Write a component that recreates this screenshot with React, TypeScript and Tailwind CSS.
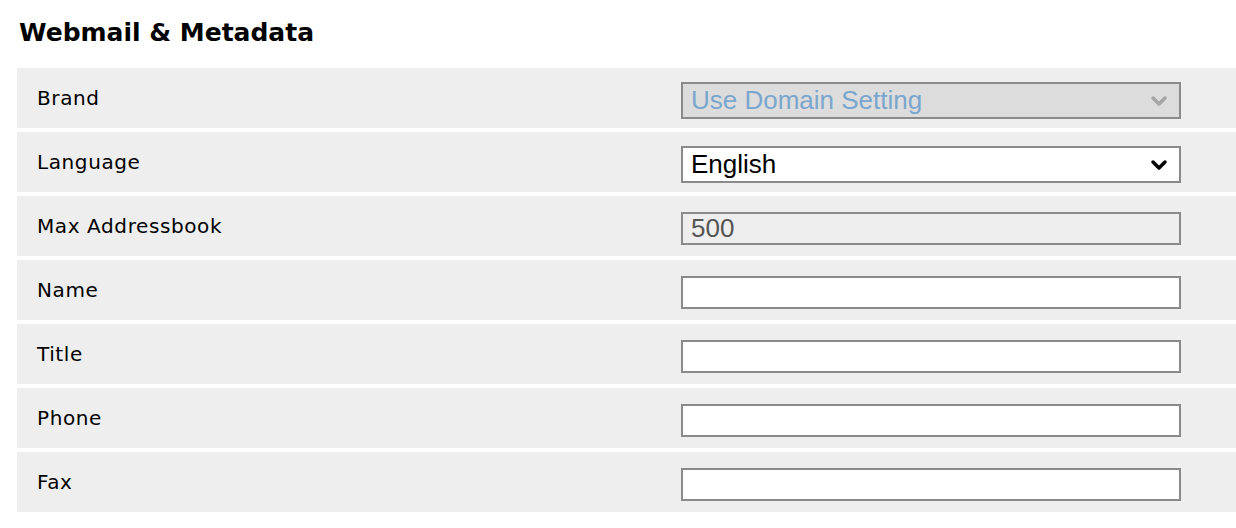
import { ChevronDown } from 'lucide-react'

const rows = ['Name', 'Title', 'Phone', 'Fax']

function Row({ label, children }: { label: string; children: React.ReactNode }) {
  return (
    <div className="flex h-[60px] items-center bg-[#eeeeee] pl-5">
      <div className="w-[644px] text-[20px] tracking-[0.6px] text-black">{label}</div>
      <div className="pt-[5px]">{children}</div>
    </div>
  )
}

export default function App() {
  return (
    <div className="bg-white h-[528px] overflow-hidden pl-[17px]" style={{ fontFamily: '"DejaVu Sans", sans-serif' }}>
      <h2 className="pt-[16px] pl-[2px] pb-[18px] text-[25px] font-bold leading-[34px] text-black">Webmail &amp; Metadata</h2>
      <div className="flex flex-col gap-[4px]">
        <Row label="Brand">
          <div className="flex h-[37px] w-[500px] items-center justify-between border-2 border-[#8a8a8a] bg-[#dcdcdc] px-2 text-[26px] text-[#7aa6cd]" style={{ fontFamily: '"Liberation Sans", Arial, sans-serif' }}>
            <span>Use Domain Setting</span>
            <ChevronDown className="h-6 w-6 text-[#a5a5a5]" strokeWidth={3.5} />
          </div>
        </Row>
        <Row label="Language">
          <div className="flex h-[37px] w-[500px] items-center justify-between border-2 border-[#8a8a8a] bg-white px-2 text-[26px] text-black" style={{ fontFamily: '"Liberation Sans", Arial, sans-serif' }}>
            <span>English</span>
            <ChevronDown className="h-6 w-6 text-black" strokeWidth={3.5} />
          </div>
        </Row>
        <Row label="Max Addressbook">
          <div className="flex h-[33px] w-[500px] items-center border-2 border-[#8a8a8a] bg-[#eeeeee] px-2 text-[26px] text-[#555555]" style={{ fontFamily: '"Liberation Sans", Arial, sans-serif' }}>
            500
          </div>
        </Row>
        {rows.map(r => (
          <Row key={r} label={r}>
            <input className="block h-[33px] w-[500px] border-2 border-[#8a8a8a] bg-white px-2 outline-none" />
          </Row>
        ))}
      </div>
    </div>
  )
}
